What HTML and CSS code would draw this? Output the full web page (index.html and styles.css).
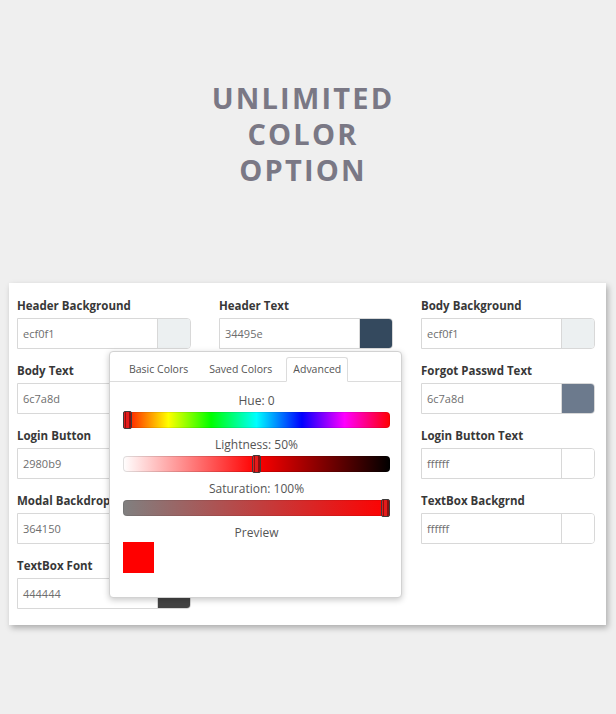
FILE: index.html
```html
<!DOCTYPE html>
<html>
<head>
  <title>Unlimited Color Option</title>
  <link rel="stylesheet" href="styles.css">
</head>
<body>

  <h1 class="hero">UNLIMITED<br>COLOR<br>OPTION</h1>

  <div class="settings-card">
    <div class="settings-col">
      <div class="field">
        <label>Header Background</label>
        <div class="color-input"><span class="value">ecf0f1</span><span class="swatch" style="background:#ecf0f1"></span></div>
      </div>
      <div class="field">
        <label>Body Text</label>
        <div class="color-input"><span class="value">6c7a8d</span><span class="swatch" style="background:#6c7a8d"></span></div>
      </div>
      <div class="field">
        <label>Login Button</label>
        <div class="color-input"><span class="value">2980b9</span><span class="swatch" style="background:#2980b9"></span></div>
      </div>
      <div class="field">
        <label>Modal Backdrop</label>
        <div class="color-input"><span class="value">364150</span><span class="swatch" style="background:#364150"></span></div>
      </div>
      <div class="field">
        <label>TextBox Font</label>
        <div class="color-input"><span class="value">444444</span><span class="swatch" style="background:#444444"></span></div>
      </div>
    </div>

    <div class="settings-col">
      <div class="field">
        <label>Header Text</label>
        <div class="color-input"><span class="value">34495e</span><span class="swatch" style="background:#34495e"></span></div>
      </div>
    </div>

    <div class="settings-col">
      <div class="field">
        <label>Body Background</label>
        <div class="color-input"><span class="value">ecf0f1</span><span class="swatch" style="background:#ecf0f1"></span></div>
      </div>
      <div class="field">
        <label>Forgot Passwd Text</label>
        <div class="color-input"><span class="value">6c7a8d</span><span class="swatch" style="background:#6c7a8d"></span></div>
      </div>
      <div class="field">
        <label>Login Button Text</label>
        <div class="color-input"><span class="value">ffffff</span><span class="swatch" style="background:#ffffff"></span></div>
      </div>
      <div class="field">
        <label>TextBox Backgrnd</label>
        <div class="color-input"><span class="value">ffffff</span><span class="swatch" style="background:#ffffff"></span></div>
      </div>
    </div>

    <!-- picker popup, opened from a swatch -->
    <div class="picker">
      <ul class="picker-tabs">
        <li>Basic Colors</li>
        <li>Saved Colors</li>
        <li class="active">Advanced</li>
      </ul>
      <div class="picker-body">
        <div class="slider-label">Hue: 0</div>
        <div class="slider hue"><span class="handle" style="left:0"></span></div>

        <div class="slider-label">Lightness: 50%</div>
        <div class="slider lightness"><span class="handle" style="left:calc(50% - 5px)"></span></div>

        <div class="slider-label">Saturation: 100%</div>
        <div class="slider saturation"><span class="handle" style="right:0"></span></div>

        <div class="slider-label">Preview</div>
        <div class="preview"></div>
      </div>
    </div>
  </div>

</body>
</html>
```

FILE: styles.css
```css
body {
  margin: 0;
  background: #efefef;
  font-family: 'Open Sans', sans-serif;
  min-height: 714px;
}

.hero {
  margin: 0;
  padding: 80px 10px 0 0;
  font-size: 29px;
  line-height: 36px;
  font-weight: 700;
  letter-spacing: 2.2px;
  text-align: center;
  color: #7a7885;
}

.settings-card {
  position: relative;
  width: 581px;
  margin: 95px 0 0 9px;
  padding: 15px 8px 16px;
  background: #fff;
  box-shadow: 2px 3px 6px rgba(0, 0, 0, 0.28);
  display: grid;
  grid-template-columns: repeat(3, 174px);
  column-gap: 28px;
  align-items: start;
}

.settings-col {
  display: flex;
  flex-direction: column;
  gap: 14px;
}

.field label {
  display: block;
  font-size: 11.5px;
  line-height: 15px;
  font-weight: 700;
  color: #383838;
  margin-bottom: 5px;
}

.color-input {
  display: flex;
  height: 29px;
  border: 1px solid #d8d8d8;
  border-radius: 0 4px 4px 0;
}

.color-input .value {
  flex: 1;
  padding-left: 5px;
  font-size: 11px;
  line-height: 29px;
  color: #6e6e6e;
}

.color-input .swatch {
  width: 32px;
  border-left: 1px solid #d8d8d8;
  border-radius: 0 3px 3px 0;
}

.picker {
  position: absolute;
  left: 100px;
  top: 68px;
  width: 291px;
  height: 245px;
  background: #fff;
  border: 1px solid #d2d2d2;
  border-radius: 4px;
  box-shadow: 0 2px 6px rgba(0, 0, 0, 0.22);
}

.picker-tabs {
  list-style: none;
  margin: 0;
  padding: 5px 0 0 12px;
  display: flex;
  gap: 7px;
  border-bottom: 1px solid #dcdcdc;
}

.picker-tabs li {
  height: 23px;
  padding: 0 6px;
  font-size: 10.5px;
  line-height: 23px;
  color: #555;
  border: 1px solid transparent;
  border-radius: 3px 3px 0 0;
  margin-bottom: -1px;
}

.picker-tabs li.active {
  background: #fff;
  border-color: #dcdcdc;
  border-bottom-color: #fff;
}

.picker-body {
  padding: 11px 11px 0 13px;
}

.slider-label {
  font-size: 12px;
  line-height: 16px;
  color: #555;
  text-align: center;
  margin-bottom: 3px;
}

.slider {
  position: relative;
  height: 16px;
  border-radius: 4px;
  margin-bottom: 9px;
  box-shadow: inset 0 0 0 1px rgba(0, 0, 0, 0.08);
}

.slider.hue {
  background: linear-gradient(to right, #f00 0%, #ff0 17%, #0f0 33%, #0ff 50%, #00f 67%, #f0f 83%, #f00 100%);
}

.slider.lightness {
  background: linear-gradient(to right, #fff 0%, #f00 50%, #000 100%);
  box-shadow: inset 0 0 0 1px rgba(0, 0, 0, 0.12);
}

.slider.saturation {
  background: linear-gradient(to right, #808080 0%, #f00 100%);
}

.slider .handle {
  position: absolute;
  top: -1px;
  width: 7px;
  height: 16px;
  background: #e41b1b;
  border: 1px solid #3d3d3d;
  border-radius: 2px;
  box-shadow: inset 2px 0 0 -1px #e41b1b, inset 3px 0 0 -1px #8a1010, inset -3px 0 0 -1px #8a1010;
}

.preview {
  width: 31px;
  height: 31px;
  margin-top: -2px;
  background: #f00;
}
```
